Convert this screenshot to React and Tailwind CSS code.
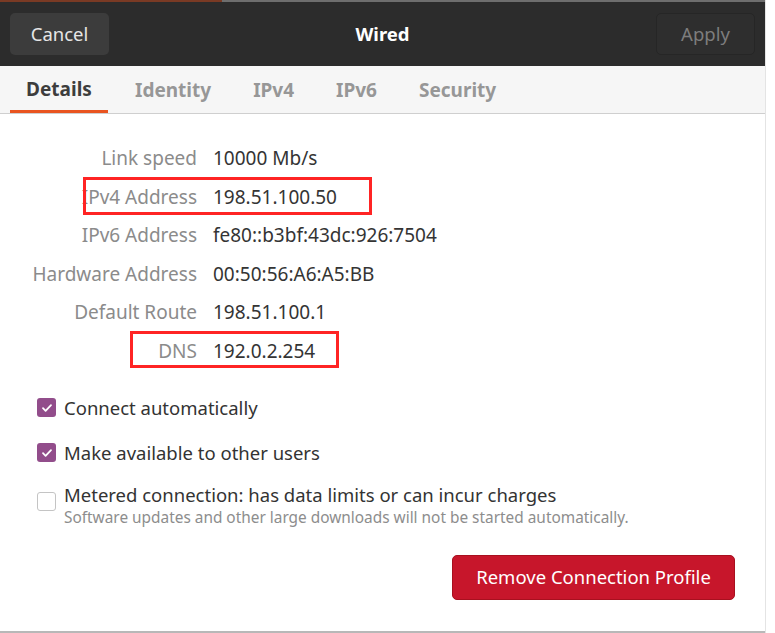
import React from "react";

const font = { fontFamily: '"Noto Sans", "Open Sans", sans-serif' };

const details = [
  { label: "Link speed", value: "10000 Mb/s" },
  { label: "IPv4 Address", value: "198.51.100.50" },
  { label: "IPv6 Address", value: "fe80::b3bf:43dc:926:7504" },
  { label: "Hardware Address", value: "00:50:56:A6:A5:BB" },
  { label: "Default Route", value: "198.51.100.1" },
  { label: "DNS", value: "192.0.2.254" },
];

const tabs = ["Identity", "IPv4", "IPv6", "Security"];

const CheckBox = ({ checked }) =>
  checked ? (
    <span className="block w-[19px] h-[19px] rounded-[3px] bg-[#924d8b] flex items-center justify-center shrink-0">
      <svg width="12" height="12" viewBox="0 0 12 12" fill="none">
        <path d="M2 6.2l2.6 2.6L10 3.2" stroke="white" strokeWidth="1.8" strokeLinecap="round" strokeLinejoin="round" />
      </svg>
    </span>
  ) : (
    <span className="block w-[19px] h-[19px] rounded-[3px] border border-[#c4c4c4] bg-white shrink-0" />
  );

export default function App() {
  return (
    <div className="w-[775px] h-[633px] bg-white relative overflow-hidden" style={font}>
      <div className="w-[766px] h-full flex flex-col border-r border-[#e4e4e4]">
        {/* header bar */}
        <div className="h-[2px] flex">
          <div className="w-[222px] bg-[#7a3a24]" />
          <div className="flex-1 bg-[#6e6e6e]" />
        </div>
        <div className="h-[64px] bg-[#2c2c2c] flex items-center justify-between px-[10px]">
          <button className="w-[99px] h-[42px] rounded-[5px] bg-[#3c3c3c] text-[#e6e6e6] text-[18.5px]">
            Cancel
          </button>
          <span className="text-white font-bold text-[18.5px]">Wired</span>
          <button className="w-[99px] h-[42px] rounded-[5px] bg-[#2e2e2e] border border-[#262626] text-[#7d7d7d] text-[18.5px]">
            Apply
          </button>
        </div>

        {/* tabs */}
        <div className="h-[48px] bg-[#f6f6f6] border-b border-[#cfcfcf] flex items-stretch pl-[10px] text-[19px] font-bold">
          <div className="w-[98px] flex items-center justify-center text-[#3d3d3d] border-b-[3px] border-[#e95420] pt-[3px]">
            Details
          </div>
          <div className="flex items-stretch ml-[6px]">
            {tabs.map((t) => (
              <div key={t} className="px-[21px] flex items-center text-[#979797] pt-[1px]">
                {t}
              </div>
            ))}
          </div>
        </div>

        {/* details */}
        <div className="relative pt-[31px]">
          <div className="grid grid-cols-[197px_1fr] gap-x-[16px] gap-y-[12.5px] text-[19px] leading-[26px]">
            {details.map((d) => (
              <React.Fragment key={d.label}>
                <span className="text-right text-[#8b8b8b]">{d.label}</span>
                <span className="text-[#343434]">{d.value}</span>
              </React.Fragment>
            ))}
          </div>
          <div className="absolute left-[83px] top-[63px] w-[289px] h-[38px] border-[3px] border-[#ff2424]" />
          <div className="absolute left-[130px] top-[217px] w-[209px] h-[37px] border-[3px] border-[#ff2424]" />
        </div>

        {/* options */}
        <div className="flex flex-col pl-[37px] mt-[31px] gap-[19px] text-[18.5px] text-[#333333]">
          <label className="flex items-center gap-[8px] h-[26px]">
            <CheckBox checked />
            Connect automatically
          </label>
          <label className="flex items-center gap-[8px] h-[26px]">
            <CheckBox checked />
            Make available to other users
          </label>
          <div className="flex items-start gap-[8px] -mt-[2px]">
            <div className="pt-[9px]">
              <CheckBox />
            </div>
            <div className="flex flex-col">
              <span className="leading-[24px]">Metered connection: has data limits or can incur charges</span>
              <span className="text-[15.4px] leading-[22px] text-[#8d8d8d]">
                Software updates and other large downloads will not be started automatically.
              </span>
            </div>
          </div>
        </div>

        <div className="flex justify-end pr-[30px] mt-[26px]">
          <button className="w-[283px] h-[45px] rounded-[5px] bg-[#c7162b] border border-[#a8101f] text-white text-[18.5px]">
            Remove Connection Profile
          </button>
        </div>

        <div className="mt-auto h-[2px] bg-[#b8b8b8]" />
      </div>
    </div>
  );
}
